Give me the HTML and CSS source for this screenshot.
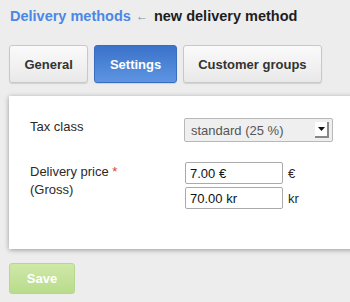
FILE: index.html
```html
<!DOCTYPE html>
<html lang="en">

<head>
    <meta charset="utf-8">
    <title>new delivery method</title>
    <link rel="stylesheet" href="styles.css">
</head>

<body>

    <h1 class="crumbs">
        <a href="#">Delivery methods</a>
        <span class="pil">&#8592;</span>
        <span class="nu">new delivery method</span>
    </h1>

    <nav class="faner">
        <button class="fane">General</button>
        <button class="fane valgt">Settings</button>
        <button class="fane">Customer groups</button>
    </nav>

    <section class="panel">
        <div class="raekke">
            <label class="navn">Tax class</label>
            <div class="felt">
                <div class="vaelg">
                    <span>standard (25 %)</span>
                    <span class="knap"><svg width="7" height="4" viewBox="0 0 7 4"><path d="M0 0h7L3.5 4z" fill="#111"/></svg></span>
                </div>
            </div>
        </div>
        <div class="raekke pris">
            <label class="navn">Delivery price <span class="krav">*</span><br>(Gross)</label>
            <div class="felt">
                <div class="linje"><input type="text" value="7.00 €"> <span>€</span></div>
                <div class="linje"><input type="text" value="70.00 kr"> <span>kr</span></div>
            </div>
        </div>
    </section>

    <button class="gem">Save</button>

</body>

</html>
```

FILE: styles.css
```css
html {
    background-color: #ededed;
}

body {
    margin: 0;
    padding: 0 9px;
    font-family: "Liberation Sans", Arial, sans-serif;
    color: #222;
    overflow: hidden;
}

.crumbs {
    margin: 0;
    padding-top: 8px;
    height: 45px;
    box-sizing: border-box;
    font-size: 14.5px;
    font-weight: bold;
    white-space: nowrap;
}

.crumbs a {
    color: #4a87e6;
    text-decoration: none;
    margin-left: 1px;
}

.crumbs .pil {
    color: #7d8fa6;
    font-size: 12px;
    margin: 0 2px 0 1px;
    position: relative;
    top: -1px;
}

.crumbs .nu {
    color: #1d1d1d;
}

.faner {
    display: flex;
    gap: 6px;
    height: 51px;
}

.fane {
    height: 38px;
    padding: 0 14.5px;
    font-family: inherit;
    font-size: 13px;
    font-weight: bold;
    color: #333;
    border: 1px solid #c8c8c8;
    border-radius: 3px;
    background: linear-gradient(#fafafa, #e9e9e9);
    box-shadow: 0 1px 1px rgba(0, 0, 0, .12);
}

.fane.valgt {
    color: #fff;
    border-color: #3a6dbf;
    background: linear-gradient(#3b72ca, #5d95e2);
}

.panel {
    background: #fff;
    margin-right: -20px;
    padding: 22px 21px 37px 21px;
    box-shadow: 0 1px 5px rgba(0, 0, 0, .35);
    font-size: 13px;
    color: #2a2a2a;
}

.raekke {
    display: flex;
}

.navn {
    width: 155px;
    line-height: 18px;
}

.krav {
    color: #e23b3b;
}

.vaelg {
    width: 141px;
    height: 22px;
    margin-left: -1px;
    border: 1px solid #b8b8b8;
    border-radius: 2px;
    background: #efefef;
    display: flex;
    justify-content: space-between;
    align-items: center;
    padding-left: 6px;
    box-sizing: content-box;
    color: #555;
    font-size: 13px;
}

.knap {
    width: 12px;
    height: 14px;
    margin-right: 3px;
    background: #fff;
    border-right: 2px solid #888;
    border-bottom: 2px solid #888;
    display: flex;
    align-items: center;
    justify-content: center;
}

.pris {
    margin-top: 20px;
}

.pris .navn {
    padding-top: 1px;
}

.linje {
    display: flex;
    align-items: center;
    gap: 5px;
    margin-bottom: 3px;
}

.linje input {
    width: 88px;
    height: 16px;
    padding: 2px 4px;
    border: 1px solid #aaa;
    border-radius: 2px;
    font-family: inherit;
    font-size: 13px;
    color: #111;
}

.gem {
    margin-top: 14px;
    width: 66px;
    height: 31px;
    border: 1px solid #b5d88e;
    border-radius: 3px;
    background: linear-gradient(#cfe8a8, #b9dc8c);
    color: #fff;
    font-family: inherit;
    font-size: 13px;
    font-weight: bold;
}
```
